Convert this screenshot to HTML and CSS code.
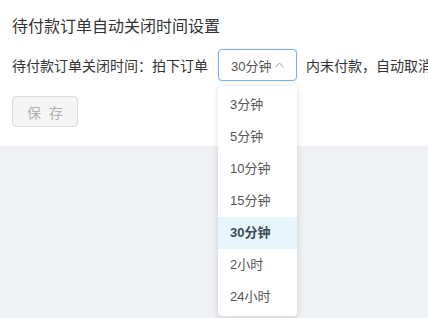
FILE: index.html
```html
<!DOCTYPE html>
<html lang="zh-CN">
<head>
<meta charset="utf-8">
<title>待付款订单自动关闭时间设置</title>
<link rel="stylesheet" href="styles.css">
</head>
<body>
<div class="panel">
  <h1 class="title">待付款订单自动关闭时间设置</h1>
  <div class="row">
    <span class="label">待付款订单关闭时间：拍下订单</span>
    <div class="select-wrap">
      <div class="select">
        <span class="select-value">30分钟</span>
        <svg class="chevron" width="9" height="6" viewBox="0 0 9 6"><path d="M0.5 5.5 L4.5 1 L8.5 5.5" fill="none" stroke="#a0a0a0" stroke-width="1"/></svg>
      </div>
      <ul class="dropdown">
        <li class="option">3分钟</li>
        <li class="option">5分钟</li>
        <li class="option">10分钟</li>
        <li class="option">15分钟</li>
        <li class="option selected">30分钟</li>
        <li class="option">2小时</li>
        <li class="option">24小时</li>
      </ul>
    </div>
    <span class="label after">内末付款，自动取消</span>
  </div>
  <button class="save" disabled>保 存</button>
</div>
</body>
</html>
```
FILE: styles.css
```css
html, body {
  margin: 0;
  padding: 0;
  height: 100%;
  overflow: hidden;
}
body {
  background: #eff0f4;
  font-family: "Liberation Sans", "Noto Sans CJK SC", sans-serif;
  color: #333;
}
.panel {
  background: #fff;
  height: 146px;
  box-sizing: border-box;
  padding: 16px 0 0 12px;
}
.title {
  margin: 0;
  font-size: 16px;
  line-height: 22px;
  font-weight: normal;
  color: #333;
  white-space: nowrap;
}
.row {
  margin-top: 11px;
  display: flex;
  align-items: center;
  height: 32px;
  white-space: nowrap;
}
.label {
  font-size: 14px;
  color: #333;
  flex: none;
}
.select-wrap {
  position: relative;
  margin-left: 10px;
  flex: none;
}
.select {
  width: 79px;
  height: 32px;
  box-sizing: border-box;
  border: 1px solid #7ab2e2;
  border-radius: 4px;
  box-shadow: 0 0 2px rgba(102, 170, 230, 0.35);
  display: flex;
  align-items: center;
  padding-left: 12px;
  gap: 4px;
}
.select-value {
  font-size: 13px;
  color: #555;
}
.chevron {
  display: block;
  margin-top: -1px;
}
.after {
  margin-left: 9px;
  flex: 0 1 auto;
  min-width: 0;
  overflow: hidden;
}
.dropdown {
  position: absolute;
  left: 0;
  top: 37px;
  width: 79px;
  margin: 0;
  padding: 3px 0;
  list-style: none;
  background: #fff;
  border-radius: 4px;
  box-shadow: 0 1px 6px rgba(0, 0, 0, 0.15);
  z-index: 10;
}
.option {
  height: 32px;
  line-height: 32px;
  padding-left: 12px;
  font-size: 13px;
  color: #555;
}
.option.selected {
  background: #e7f5fd;
  font-weight: bold;
  color: #3d4a55;
}
.save {
  margin-top: 15px;
  width: 66px;
  height: 31px;
  border: 1px solid #dcdcdc;
  border-radius: 4px;
  background: #f5f5f5;
  color: #b0b0b0;
  font-family: "Liberation Sans", "Noto Sans CJK SC", sans-serif;
  font-size: 14px;
  word-spacing: 4px;
  padding: 0;
}
```
